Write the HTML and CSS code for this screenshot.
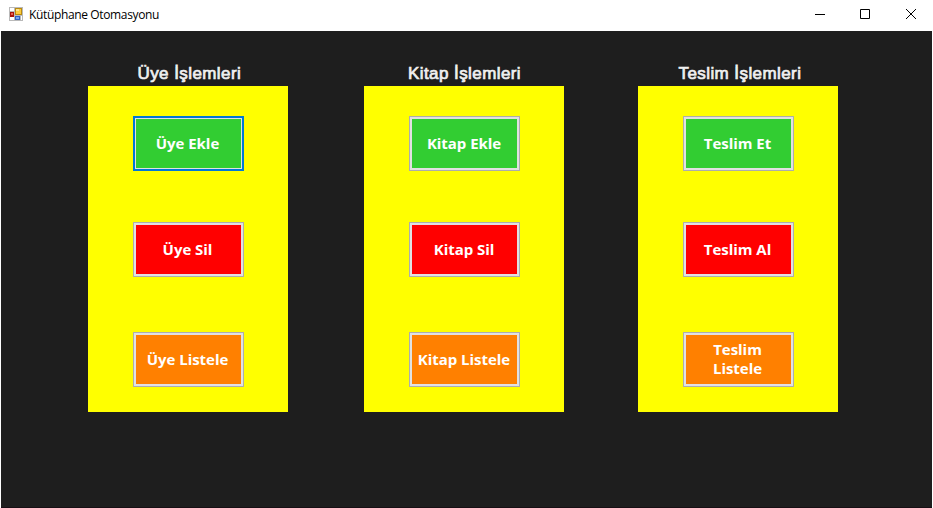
FILE: index.html
```html
<!DOCTYPE html>
<html lang="tr">
<head>
<meta charset="utf-8">
<title>Kütüphane Otomasyonu</title>
<link rel="stylesheet" href="styles.css">
</head>
<body>
<div class="window">
  <header class="titlebar">
    <svg class="app-icon" width="14" height="14" viewBox="0 0 14 14" shape-rendering="crispEdges">
      <path fill="#b9b9b9" d="M0 0h14v14H0z"/>
      <path fill="#fff" d="M1 1h4v3H1zM1 10h4v3H1zM12 9h1v4h-1z"/>
      <path fill="#a8150c" d="M1 5h4v5H1z"/>
      <path fill="#e8604f" d="M2 6h2v2H2z"/>
      <path fill="#b98a10" d="M6 1h7v7H6z"/>
      <path fill="#fccb3c" d="M7 2h5v5H7z"/>
      <path fill="#ffe48c" d="M7 2h3v2H7z"/>
      <path fill="#2f62c4" d="M6 9h5v4H6z"/>
      <path fill="#76a4ee" d="M7 10h3v2H7z"/>
    </svg>
    <h1 class="title">Kütüphane Otomasyonu</h1>
    <div class="controls">
      <svg class="control" width="45" height="30" viewBox="0 0 45 30"><path d="M17 14.5h10"/></svg>
      <svg class="control" width="45" height="30" viewBox="0 0 45 30"><path d="M17.500 9.500h9v9h-9z"/></svg>
      <svg class="control" width="45" height="30" viewBox="0 0 45 30"><path d="M18 9l10 10M28 9l-10 10"/></svg>
    </div>
  </header>
  <main class="client">
    <section class="group">
      <h2 class="heading heading-uye">Üye İşlemleri</h2>
      <div class="panel">
        <button class="btn add focused">Üye Ekle</button>
        <button class="btn remove">Üye Sil</button>
        <button class="btn list">Üye Listele</button>
      </div>
    </section>
    <section class="group">
      <h2 class="heading heading-kitap">Kitap İşlemleri</h2>
      <div class="panel">
        <button class="btn add">Kitap Ekle</button>
        <button class="btn remove">Kitap Sil</button>
        <button class="btn list">Kitap Listele</button>
      </div>
    </section>
    <section class="group">
      <h2 class="heading heading-teslim">Teslim İşlemleri</h2>
      <div class="panel">
        <button class="btn add">Teslim Et</button>
        <button class="btn remove">Teslim Al</button>
        <button class="btn list">Teslim<br>Listele</button>
      </div>
    </section>
  </main>
</div>
</body>
</html>
```
FILE: styles.css
```css
* { box-sizing: border-box; }
body { margin: 0; background: #fff; }
.window { width: 933px; height: 508px; display: flex; flex-direction: column; overflow: hidden; }
.titlebar { height: 31px; flex: none; display: flex; align-items: flex-start; padding-left: 9px; background: #fff; }
.app-icon { margin-top: 7px; }
.title { margin: 0 0 0 6px; font: 400 12px/30px "Open Sans", "Noto Sans", sans-serif; letter-spacing: -0.36px; color: #000; white-space: nowrap; }
.controls { display: flex; margin-left: auto; }
.control { display: block; fill: none; stroke: #000; stroke-width: 1; }
.client { flex: 1; margin: 0 1px; padding: 31px 0 0 87px; display: grid; grid-template-columns: 200px 200px 200px; column-gap: 75px; align-items: start; background: #1e1e1e; border-bottom: 1px solid #170f14; }
.client .group:nth-child(2) { margin-left: 1px; }
.group { width: 200px; }
.heading { margin: 0; height: 24px; font: 400 17px/24px "Liberation Sans", sans-serif; color: #f0f0f0; -webkit-text-stroke: 0.7px #f0f0f0; letter-spacing: 0.42px; white-space: nowrap; }
.heading-uye { padding-left: 49.5px; }
.heading-kitap { padding-left: 44px; }
.heading-teslim { padding-left: 40.5px; }
.panel { height: 326px; padding: 30px 0 0 45px; background: #ff0; display: grid; grid-template-rows: 106px 110px 55px; }
.btn { width: 111px; height: 55px; padding: 0 2px 1px 0; border: 1px solid #adadad; box-shadow: inset 0 0 0 2px #e1e1e1; color: #fff; font: 700 15px/19px "Open Sans", "Noto Sans", sans-serif; letter-spacing: -0.04px; text-align: center; white-space: nowrap; }
.group:nth-child(2) .btn { padding-right: 1px; }
.add { background: #32cd32; }
.remove { background: #f00; }
.list { background: #ff8000; }
.focused { border: 2px solid #0078d7; box-shadow: inset 0 0 0 1px #e1e1e1; }
```
